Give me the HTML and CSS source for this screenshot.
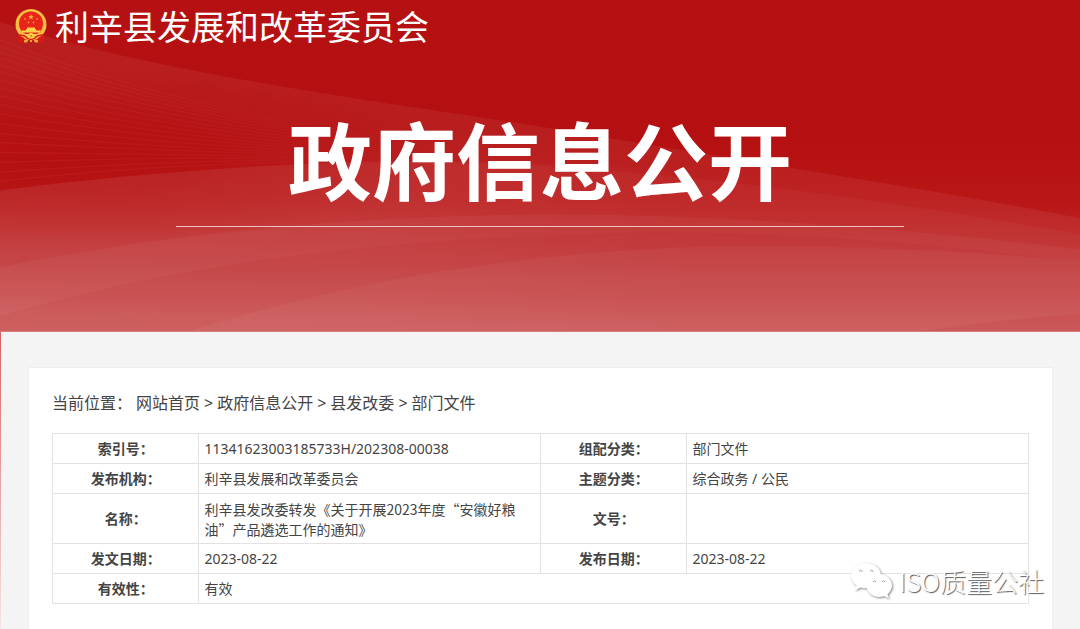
FILE: index.html
```html
<!DOCTYPE html>
<html lang="zh-CN">
<head>
    <meta charset="UTF-8">
    <meta name="viewport" content="width=device-width, initial-scale=1.0">
    <title>利辛县发展和改革委员会 - 政府信息公开</title>
    <link rel="stylesheet" href="styles.css">
</head>
<body>
    <header class="banner">
        <svg class="banner-bg" viewBox="0 0 1080 332" preserveAspectRatio="none" aria-hidden="true">
            <defs>
                <linearGradient id="base" x1="0" y1="0" x2="0" y2="1">
                    <stop offset="0" stop-color="#b51112" />
                    <stop offset="0.4" stop-color="#b51011" />
                    <stop offset="0.6" stop-color="#b91616" />
                    <stop offset="0.8" stop-color="#be2a2b" />
                    <stop offset="1" stop-color="#c84b4c" />
                </linearGradient>
                <radialGradient id="shade">
                    <stop offset="0" stop-color="#b51011" />
                    <stop offset="0.4" stop-color="#b51011" stop-opacity="0.8" />
                    <stop offset="1" stop-color="#b51011" stop-opacity="0" />
                </radialGradient>
                <linearGradient id="fade" x1="0" y1="0" x2="440" y2="0" gradientUnits="userSpaceOnUse">
                    <stop offset="0" stop-color="#d5494a" stop-opacity="0.18" />
                    <stop offset="0.5" stop-color="#d5494a" stop-opacity="0.12" />
                    <stop offset="1" stop-color="#d5494a" stop-opacity="0" />
                </linearGradient>
                <linearGradient id="glow" x1="0" y1="0" x2="700" y2="0" gradientUnits="userSpaceOnUse">
                    <stop offset="0" stop-color="#fff" stop-opacity="0.05" />
                    <stop offset="0.5" stop-color="#fff" stop-opacity="0.04" />
                    <stop offset="1" stop-color="#fff" stop-opacity="0" />
                </linearGradient>
            </defs>
            <rect width="1080" height="332" fill="url(#base)" />
            <path fill="#fff" fill-opacity="0.06" d="M0 22C90 51 170 67 255 82C350 99 440 111 540 127C640 144 720 157 800 170C900 186 1000 203 1080 219V332H0Z" />
            <ellipse cx="60" cy="155" rx="400" ry="90" fill="url(#shade)" />
            <g fill="none" stroke="url(#fade)" stroke-width="1">
                <path d="M0 40Q180 112 440 146" />
                <path d="M0 46Q180 115 440 147" />
                <path d="M0 52Q180 118 440 148" />
                <path d="M0 58Q180 121 440 149" />
                <path d="M0 65Q180 124 440 150" />
                <path d="M0 72Q180 128 440 151" />
                <path d="M0 80Q180 132 440 152" />
                <path d="M0 88Q180 136 440 153" />
                <path d="M0 96Q180 140 440 154" />
                <path d="M0 105Q180 143 440 155" />
                <path d="M0 114Q180 146 440 156" />
                <path d="M0 124Q180 149 440 157" />
                <path d="M0 134Q180 151 440 158" />
                <path d="M0 143Q180 153 440 158" />
                <path d="M0 153Q180 155 440 159" />
                <path d="M0 163Q180 156 440 159" />
                <path d="M0 173Q180 158 440 160" />
                <path d="M0 182Q180 160 440 161" />
            </g>
            <path fill="#fff" fill-opacity="0.03" d="M0 191C110 177 240 165 380 162C560 160 800 185 1080 235V332H0Z" />
            <path fill="url(#glow)" d="M0 191C110 177 240 165 380 162C560 160 640 168 700 174V332H0Z" />
            <path fill="#fff" fill-opacity="0.045" d="M0 268C180 231 380 215 560 215C740 216 920 231 1080 250V332H0Z" />
            <path fill="#b51010" fill-opacity="0.07" d="M0 317C180 263 400 236 660 233C820 234 960 247 1080 263V332H0Z" />
            <path fill="#fff" fill-opacity="0.04" d="M190 332C370 275 560 247 760 247C900 248 1000 254 1080 262V332Z" />
            <path fill="#b51010" fill-opacity="0.08" d="M920 332Q1000 320 1080 315V332Z" />
        </svg>

        <div class="site-name">
            <svg class="emblem" viewBox="0 0 32 34" aria-hidden="true">
                <path fill="#d31a16" d="M4 23L3 33H10L16 30L22 33H29L28 23Z" />
                <circle cx="16" cy="15.5" r="15.5" fill="#f3b63c" />
                <circle cx="16" cy="15.5" r="14" fill="none" stroke="#ffd75a" stroke-width="1" stroke-dasharray="2 1" />
                <circle cx="16" cy="14.5" r="12" fill="#e9241b" />
                <path fill="#f5b040" d="M16 5L16.700 7H19L17.200 8.300L17.800 10.500L16 9.200L14.200 10.500L14.800 8.300L13 7H15.300Z" />
                <g fill="#f0902c">
                    <circle cx="10" cy="10" r="0.900" />
                    <circle cx="22" cy="10" r="0.900" />
                    <circle cx="13.500" cy="13.500" r="0.900" />
                    <circle cx="18.500" cy="13.500" r="0.900" />
                </g>
                <path fill="#ffd04a" d="M12 18.500H20V20H21V21.500H25V23.500H7V21.500H11V20H12ZM6 25H26L24 27H8Z" />
                <circle cx="16" cy="27" r="3" fill="#ffd04a" />
                <circle cx="16" cy="27" r="1" fill="#d9701f" />
                <path fill="none" stroke="#d92219" stroke-width="1.500" d="M4 26Q10 26 12 29Q16 32 20 29Q22 26 28 26" />
                <path fill="#d31a16" d="M3 26L9 29L8 33H3ZM29 26L23 29L24 33H29Z" />
                <path fill="#efa332" d="M9 31L14 30L12 33.500H9ZM23 31L18 30L20 33.500H23ZM15 31H17V33H15Z" />
            </svg>
            <span>利辛县发展和改革委员会</span>
        </div>
        <h1>政府信息公开</h1>
    </header>

    <main class="page">
        <div class="content">
            <nav class="position">
                <span>当前位置：</span>
                <a href="#">网站首页</a>
                <span>&gt;</span>
                <a href="#">政府信息公开</a>
                <span>&gt;</span>
                <a href="#">县发改委</a>
                <span>&gt;</span>
                <a href="#">部门文件</a>
            </nav>
            <table class="info">
                <tr>
                    <th>索引号：</th>
                    <td>11341623003185733H/202308-00038</td>
                    <th>组配分类：</th>
                    <td>部门文件</td>
                </tr>
                <tr>
                    <th>发布机构：</th>
                    <td>利辛县发展和改革委员会</td>
                    <th>主题分类：</th>
                    <td>综合政务 / 公民</td>
                </tr>
                <tr>
                    <th>名称：</th>
                    <td class="name">利辛县发改委转发《关于开展2023年度“安徽好粮油”产品遴选工作的通知》</td>
                    <th>文号：</th>
                    <td></td>
                </tr>
                <tr>
                    <th>发文日期：</th>
                    <td>2023-08-22</td>
                    <th>发布日期：</th>
                    <td>2023-08-22</td>
                </tr>
                <tr>
                    <th>有效性：</th>
                    <td colspan="3">有效</td>
                </tr>
            </table>
        </div>
    </main>

    <div class="watermark">
        <svg viewBox="0 0 44 38" aria-hidden="true">
            <path d="M16 1C7.500 1 1 6.500 1 13.500C1 17.500 3 21 6.500 23.500L5 28.500L10.500 25.500C12.300 26 14 26.300 16 26.300C24.500 26.300 31 20.500 31 13.500S24.500 1 16 1Z" />
            <path d="M29 12C22 12 16.500 17 16.500 23.500S22 35 29 35C30.800 35 32.500 34.700 34 34L39 36.500L37.500 32.300C40 30 42 27 42 23.500C42 17 36 12 29 12Z" />
            <path class="eye" d="M9 9.500Q10.500 7 12.500 9.500M20 9.500Q21.500 7 23.500 9.500M23 20Q24.500 17.500 26 20M32 20Q33.500 17.500 35 20" />
        </svg>
        <span>ISO质量公社</span>
    </div>
</body>
</html>
```
FILE: styles.css
```css
* {
    box-sizing: border-box;
}
body {
    margin: 0;
    min-height: 100vh;
    display: flex;
    flex-direction: column;
    position: relative;
    font-family: "Noto Sans", "Noto Sans CJK SC", sans-serif;
    font-size: 14px;
    color: #444;
    background: linear-gradient(#d45a5a 50%, #f7e4e4);
}
a {
    color: inherit;
    text-decoration: none;
}

/* banner */
.banner {
    position: relative;
    padding-bottom: 104px;
    color: #fff;
    border-bottom: 1px solid #d77b7b;
}
.banner-bg {
    position: absolute;
    top: 0;
    left: 0;
    width: 100%;
    height: 100%;
}
.site-name {
    position: relative;
    display: flex;
    align-items: center;
    gap: 8px;
    height: 52px;
    padding-left: 15px;
    font-family: "Noto Sans CJK SC", sans-serif;
    font-size: 34px;
    line-height: 48px;
}
.emblem {
    width: 32px;
    height: 34px;
}
h1 {
    position: relative;
    width: 728px;
    max-width: 90%;
    margin: 50px auto 0;
    padding: 0 0 12px;
    border-bottom: 1px solid #edc4c4;
    font-family: "Noto Sans CJK SC", sans-serif;
    font-size: 84px;
    font-weight: bold;
    line-height: 112px;
    text-align: center;
}

/* content */
.page {
    flex: 1;
    display: flex;
    margin-left: 1px;
    padding: 35px 27px 0;
    background: #f4f4f4;
}
.content {
    flex: 1;
    padding: 23px;
    background: #fff;
    border: 1px solid #eee;
    border-bottom: none;
}
.position {
    display: flex;
    flex-wrap: wrap;
    gap: 4px;
    margin-bottom: 18px;
    font-size: 16px;
    line-height: 24px;
}
.info {
    width: 100%;
    table-layout: fixed;
    border-collapse: collapse;
}
.info th,
.info td {
    padding: 5px 5px 4px;
    border: 1px solid #e2e2e2;
    line-height: 20px;
    text-align: left;
}
.info th {
    width: 15%;
    text-align: center;
}
.info .name {
    font-family: "Noto Sans CJK SC", sans-serif;
}

/* watermark */
.watermark {
    position: absolute;
    right: 36px;
    bottom: 29px;
    display: flex;
    align-items: center;
    gap: 5px;
    color: #fff;
    font-family: "Noto Sans CJK SC", sans-serif;
    font-size: 26px;
    font-weight: 300;
    line-height: 38px;
    text-shadow: 1px 1px 1px #555;
}
.watermark svg {
    width: 44px;
    height: 38px;
    fill: #fff;
    filter: drop-shadow(1px 1px 1px #888);
}
.watermark .eye {
    fill: none;
    stroke: #999;
}
```
